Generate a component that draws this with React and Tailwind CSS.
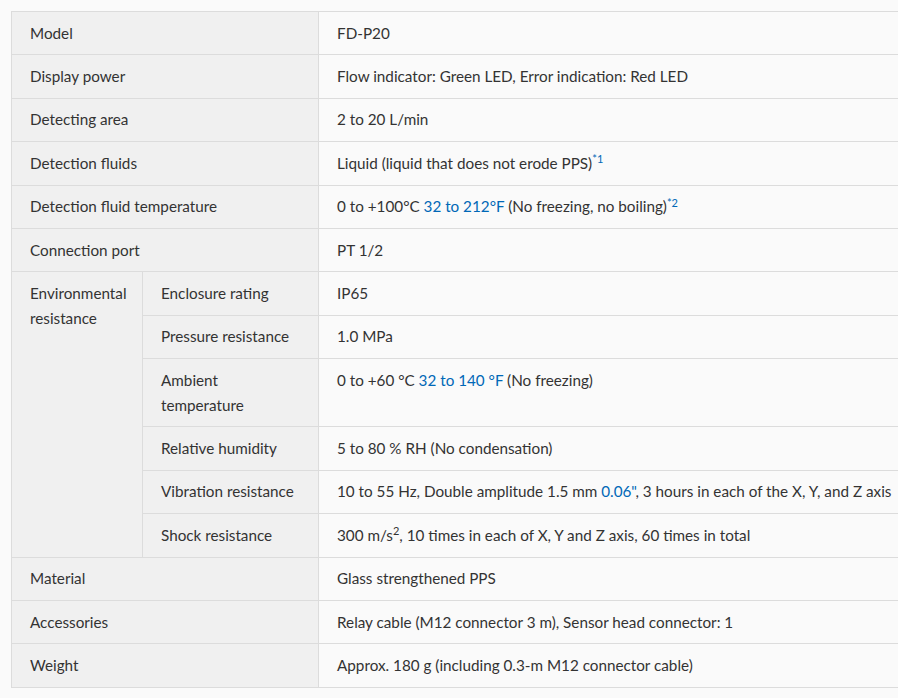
const BLUE = 'text-[#0068b7]';

const rows = [
  { label: 'Model', value: 'FD-P20' },
  { label: 'Display power', value: 'Flow indicator: Green LED, Error indication: Red LED' },
  { label: 'Detecting area', value: '2 to 20 L/min' },
  {
    label: 'Detection fluids',
    value: (
      <>
        Liquid (liquid that does not erode PPS)<sup className={`${BLUE} text-[11px]`}>*1</sup>
      </>
    ),
  },
  {
    label: 'Detection fluid temperature',
    value: (
      <>
        0 to +100°C <span className={BLUE}>32 to 212°F</span> (No freezing, no boiling)
        <sup className={`${BLUE} text-[11px]`}>*2</sup>
      </>
    ),
  },
  { label: 'Connection port', value: 'PT 1/2' },
];

const envRows = [
  { label: 'Enclosure rating', value: 'IP65' },
  { label: 'Pressure resistance', value: '1.0 MPa' },
  {
    label: 'Ambient temperature',
    value: (
      <>
        0 to +60 °C <span className={BLUE}>32 to 140 °F</span> (No freezing)
      </>
    ),
  },
  { label: 'Relative humidity', value: '5 to 80 % RH (No condensation)' },
  {
    label: 'Vibration resistance',
    value: (
      <>
        10 to 55 Hz, Double amplitude 1.5 mm <span className={BLUE}>0.06"</span>, 3 hours in each of the X, Y, and Z axis
      </>
    ),
  },
  {
    label: 'Shock resistance',
    value: (
      <>
        300 m/s<sup className="text-[11px]">2</sup>, 10 times in each of X, Y and Z axis, 60 times in total
      </>
    ),
  },
];

const tailRows = [
  { label: 'Material', value: 'Glass strengthened PPS' },
  { label: 'Accessories', value: 'Relay cable (M12 connector 3 m), Sensor head connector: 1' },
  { label: 'Weight', value: 'Approx. 180 g (including 0.3-m M12 connector cable)' },
];

const th = 'border border-[#dcdcdc] bg-[#f0f0f0] text-left font-normal align-top px-[18px] py-[8.7px]';
const td = 'border border-[#dcdcdc] bg-[#fafafa] align-top px-[18px] py-[8.7px]';

export default function App() {
  return (
    <div
      className="w-[898px] h-[698px] overflow-hidden bg-[#fafafa] pt-[11px] pl-[11px] text-[15.25px] leading-[25px] text-[#333]"
      style={{ fontFamily: 'Lato, "Open Sans", sans-serif' }}
    >
      <table className="border-collapse w-[1000px] table-fixed">
        <colgroup>
          <col className="w-[131px]" />
          <col className="w-[176px]" />
          <col />
        </colgroup>
        <tbody>
          {rows.map(r => (
            <tr key={r.label}>
              <th colSpan={2} className={th}>{r.label}</th>
              <td className={td}>{r.value}</td>
            </tr>
          ))}
          {envRows.map((r, i) => (
            <tr key={r.label}>
              {i === 0 && (
                <th rowSpan={envRows.length} className={th}>Environmental resistance</th>
              )}
              <th className={th}>{r.label}</th>
              <td className={td}>{r.value}</td>
            </tr>
          ))}
          {tailRows.map(r => (
            <tr key={r.label}>
              <th colSpan={2} className={th}>{r.label}</th>
              <td className={td}>{r.value}</td>
            </tr>
          ))}
        </tbody>
      </table>
    </div>
  );
}
